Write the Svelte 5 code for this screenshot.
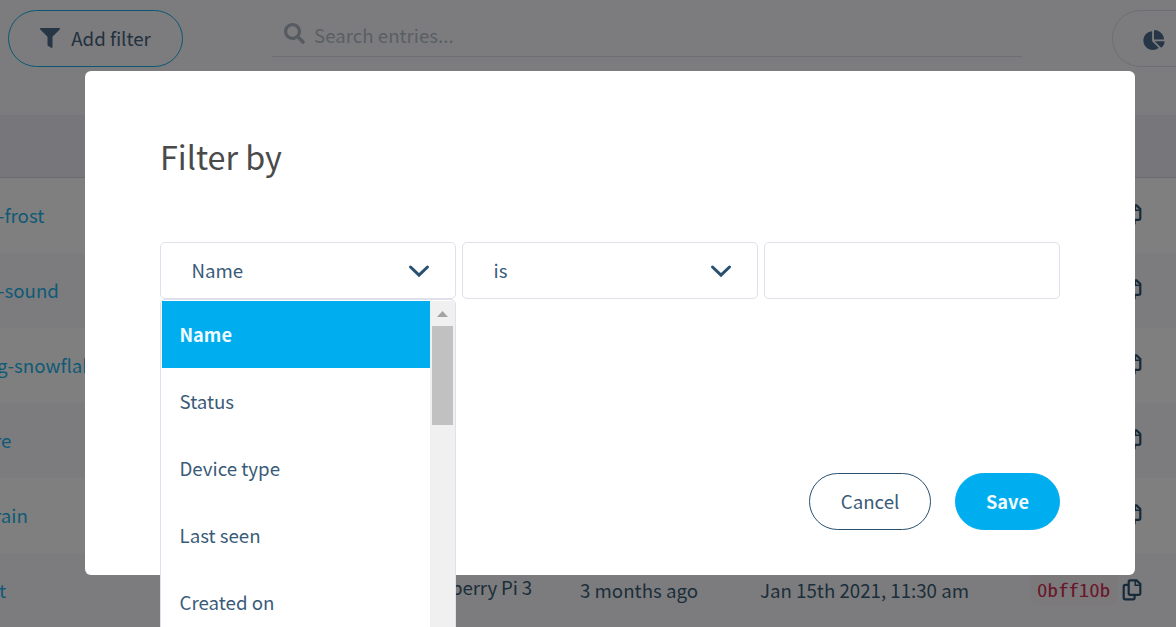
<script>
  const rows = [
    { name: '-frost', shift: -2 },
    { name: '-sound', shift: -2 },
    { name: 'g-snowflake', shift: -3 },
    { name: 're', shift: -6 },
    { name: 'rain', shift: -6 },
    { name: 't', shift: -1, type: 'Raspberry Pi 3', seen: '3 months ago', created: 'Jan 15th 2021, 11:30 am', commit: '0bff10b' }
  ];
  const options = ['Name', 'Status', 'Device type', 'Last seen', 'Created on'];
</script>

{#snippet chevron()}
  <svg class="chevron" width="22" height="14" viewBox="0 0 22 14"><path d="M2.500 3 11 11.200 19.500 3" fill="none" stroke="#2a506f" stroke-width="3" stroke-linecap="round" stroke-linejoin="miter" /></svg>
{/snippet}

<div class="screen">
  <div class="page">
    <header>
      <button class="pill add">
        <svg width="20" height="20" viewBox="0 0 512 512"><path fill="currentColor" d="M488 0H24C2.700 0-8 25.900 7 41L192 226V432c0 7.800 3.800 15.200 10.200 19.700l80 56C298 518.700 320 507.500 320 488V226L505 41C520 25.900 509.300 0 488 0z" /></svg>
        <span>Add filter</span>
      </button>
      <div class="search">
        <svg width="21" height="21" viewBox="0 0 512 512"><path fill="currentColor" d="M505 442.700 405.300 343c-4.500-4.500-10.600-7-17-7H372c27.600-35.300 44-79.700 44-128C416 93.100 322.900 0 208 0S0 93.100 0 208s93.100 208 208 208c48.300 0 92.700-16.400 128-44v16.300c0 6.400 2.500 12.500 7 17l99.700 99.700c9.400 9.400 24.600 9.400 33.900 0l28.300-28.300c9.400-9.400 9.400-24.600.1-34zM208 336c-70.700 0-128-57.200-128-128 0-70.700 57.200-128 128-128 70.700 0 128 57.200 128 128 0 70.700-57.200 128-128 128z" /></svg>
        <span>Search entries...</span>
      </div>
      <button class="pill views" aria-label="Views">
        <svg width="22" height="20" viewBox="0 0 544 512"><path fill="currentColor" d="M528 288H290.500l158 158c6 6 15.800 6.500 22 .700 38.700-36.500 65.300-85.600 73.100-140.900 1.400-9.500-6-17.800-15.600-17.800zM527.800 223.200C518.700 103 409 8 288.800 .200 279.600-.4 272 7.500 272 16.700V240h239.300c9.200 0 17.100-7.600 16.500-16.800zM224 288V50.500c0-9.600-8.300-17-17.800-15.600C86.500 51.800-4.100 155.600.1 280.400 4.400 408.500 114.800 513.600 243 512c50.400-.6 96.900-16.900 135.200-44 7.900-5.600 8.400-17.200 1.600-24.100z" /></svg>
      </button>
    </header>
    <div class="thead"></div>
    {#each rows as row}
      <div class="row">
        <span class="name" style="margin-left: {row.shift}px">{row.name}</span>
        <span class="type">{row.type ?? ''}</span>
        <span class="seen">{row.seen ?? ''}</span>
        <span class="created">{row.created ?? ''}</span>
        <span class="commit">{#if row.commit}<code><span>{row.commit}</span></code>{/if}</span>
        <svg class="copy" width="20" height="22" viewBox="0 0 20 22" fill="none" stroke="currentColor" stroke-width="2.200">
          <path d="M8.300 1.400H14.600L18.300 5V14.200Q18.300 15.800 16.700 15.800H8.300Q6.700 15.800 6.700 14.200V3Q6.700 1.400 8.300 1.400Z" />
          <path d="M13.300 1.500V6.200H18.300" stroke-width="1.600" />
          <path d="M6.300 5.800H3.300Q1.700 5.800 1.700 7.400V18.800Q1.700 20.400 3.300 20.400H11Q12.600 20.400 12.600 18.800V16" />
        </svg>
      </div>
    {/each}
  </div>

  <div class="overlay">
    <section class="modal">
      <h2>Filter by</h2>
      <div class="fields">
        <div class="field">
          <span>Name</span>{@render chevron()}
          <div class="menu">
            <ul>
              {#each options as option, i}
                <li class:active={i === 0}>{option}</li>
              {/each}
            </ul>
            <div class="scrollbar">
              <svg width="11" height="6" viewBox="0 0 11 6"><path d="M0 6 5.500 0 11 6Z" fill="#a3a3a3" /></svg>
              <div class="thumb"></div>
            </div>
          </div>
        </div>
        <div class="field"><span>is</span>{@render chevron()}</div>
        <div class="field"></div>
      </div>
      <footer>
        <button class="pill cancel">Cancel</button>
        <button class="pill save">Save</button>
      </footer>
    </section>
  </div>
</div>

<style>
  :global(body) { margin: 0; overflow: hidden; }
  .screen, .screen * { box-sizing: border-box; }
  .screen {
    position: relative; width: 1176px; height: 627px; overflow: hidden;
    font-family: "Noto Sans CJK SC", "Noto Sans", sans-serif;
    font-size: 18.700px; line-height: 28px; color: #3a5b78;
  }
  .page { height: 100%; background: #f9f9fc; color: #3a5c76; }
  header { display: flex; height: 115px; padding: 10px 0 0 8px; align-items: flex-start; }
  .pill {
    display: flex; flex: none; align-items: center; justify-content: center; height: 57px; padding: 0 0 2px;
    border: 1px solid; border-radius: 29px; font: inherit; background: transparent; color: #3a5b78;
  }
  .add { width: 175px; gap: 11px; border-color: #18b0e6; color: #46627c; }
  .add svg { margin-top: 1px; color: #4d6c8c; }
  .search {
    display: flex; flex: none; align-items: flex-start; width: 750px; height: 47px; margin-left: 89px;
    padding: 11px 0 0 12px; gap: 9px; border-bottom: 1px solid #dddde8; color: #b4bdc8;
  }
  .search svg { margin-top: 2px; color: #aeb7c2; }
  .views { width: 120px; margin-left: 90px; justify-content: flex-start; padding-left: 30px; border-color: #dcdce8; }
  .views svg { margin-top: 4px; color: #4d6c8c; }
  .thead { height: 63px; background: #ecedf7; border-bottom: 1px solid #d6d8e2; }
  .row {
    display: grid; grid-template-columns: 409px 171px 180px 271px 91px 20px; align-items: center;
    height: 75px; padding-bottom: 2px; background: #fff; white-space: nowrap;
  }
  .row:nth-child(even) { background: #f9f9fc; }
  .name { color: #22b4ec; }
  .type { position: relative; top: -3px; letter-spacing: -.15px; }
  .copy { color: #2f5572; }
  code {
    display: inline-block; width: 86px; height: 32px; padding: 1px 6px; border-radius: 4px; background: #f9f2f4; color: #d13059;
    font: 18.300px/30px "Noto Sans Mono CJK SC", "DejaVu Sans Mono", monospace;
  }
  code span { display: inline-block; transform: scaleX(1.143); transform-origin: left; }
  .commit { margin-top: -2px; }
  .overlay { position: absolute; inset: 0; padding: 71px 41px 0 85px; background: rgba(0, 0, 0, .5); }
  .modal { width: 1050px; height: 504px; padding: 62px 75px 0; border-radius: 6px; background: #fff; }
  h2 { margin: 0; font-size: 32.300px; line-height: 46px; font-weight: 400; color: #4a4a4a; }
  .fields { display: grid; grid-template-columns: repeat(3, 296px); gap: 6px; margin-top: 63px; }
  .field {
    position: relative; display: flex; align-items: center; justify-content: space-between;
    height: 57px; padding: 0 25px 2px 30.500px; border: 1px solid #dfe0eb; border-radius: 5px;
  }
  .chevron { margin-top: 2px; }
  .menu {
    position: absolute; left: -1px; top: 56px; display: flex; width: 296px; height: 400px;
    padding: 1px 0 0 1px; border: 1px solid #dfe0eb; border-radius: 5px; background: #fff;
  }
  ul { flex: 1; margin: 0; padding: 0; list-style: none; }
  li { height: 67px; padding-left: 17.500px; line-height: 65px; }
  .active { background: #00aeef; color: #f0faff; font-weight: 700; font-size: 18.200px; line-height: 67px; }
  .scrollbar { display: flex; flex-direction: column; align-items: center; width: 25px; padding-top: 10px; background: #f0f0f0; }
  .thumb { width: 21px; height: 99px; margin-top: 9px; background: #c1c1c1; }
  footer { display: flex; justify-content: flex-end; gap: 24px; margin-top: 174px; }
  .cancel { width: 122px; border-color: #2a506f; }
  .save { width: 105px; border-color: #00aeef; background: #00aeef; color: #f0faff; font-weight: 700; font-size: 18.200px; }
</style>
